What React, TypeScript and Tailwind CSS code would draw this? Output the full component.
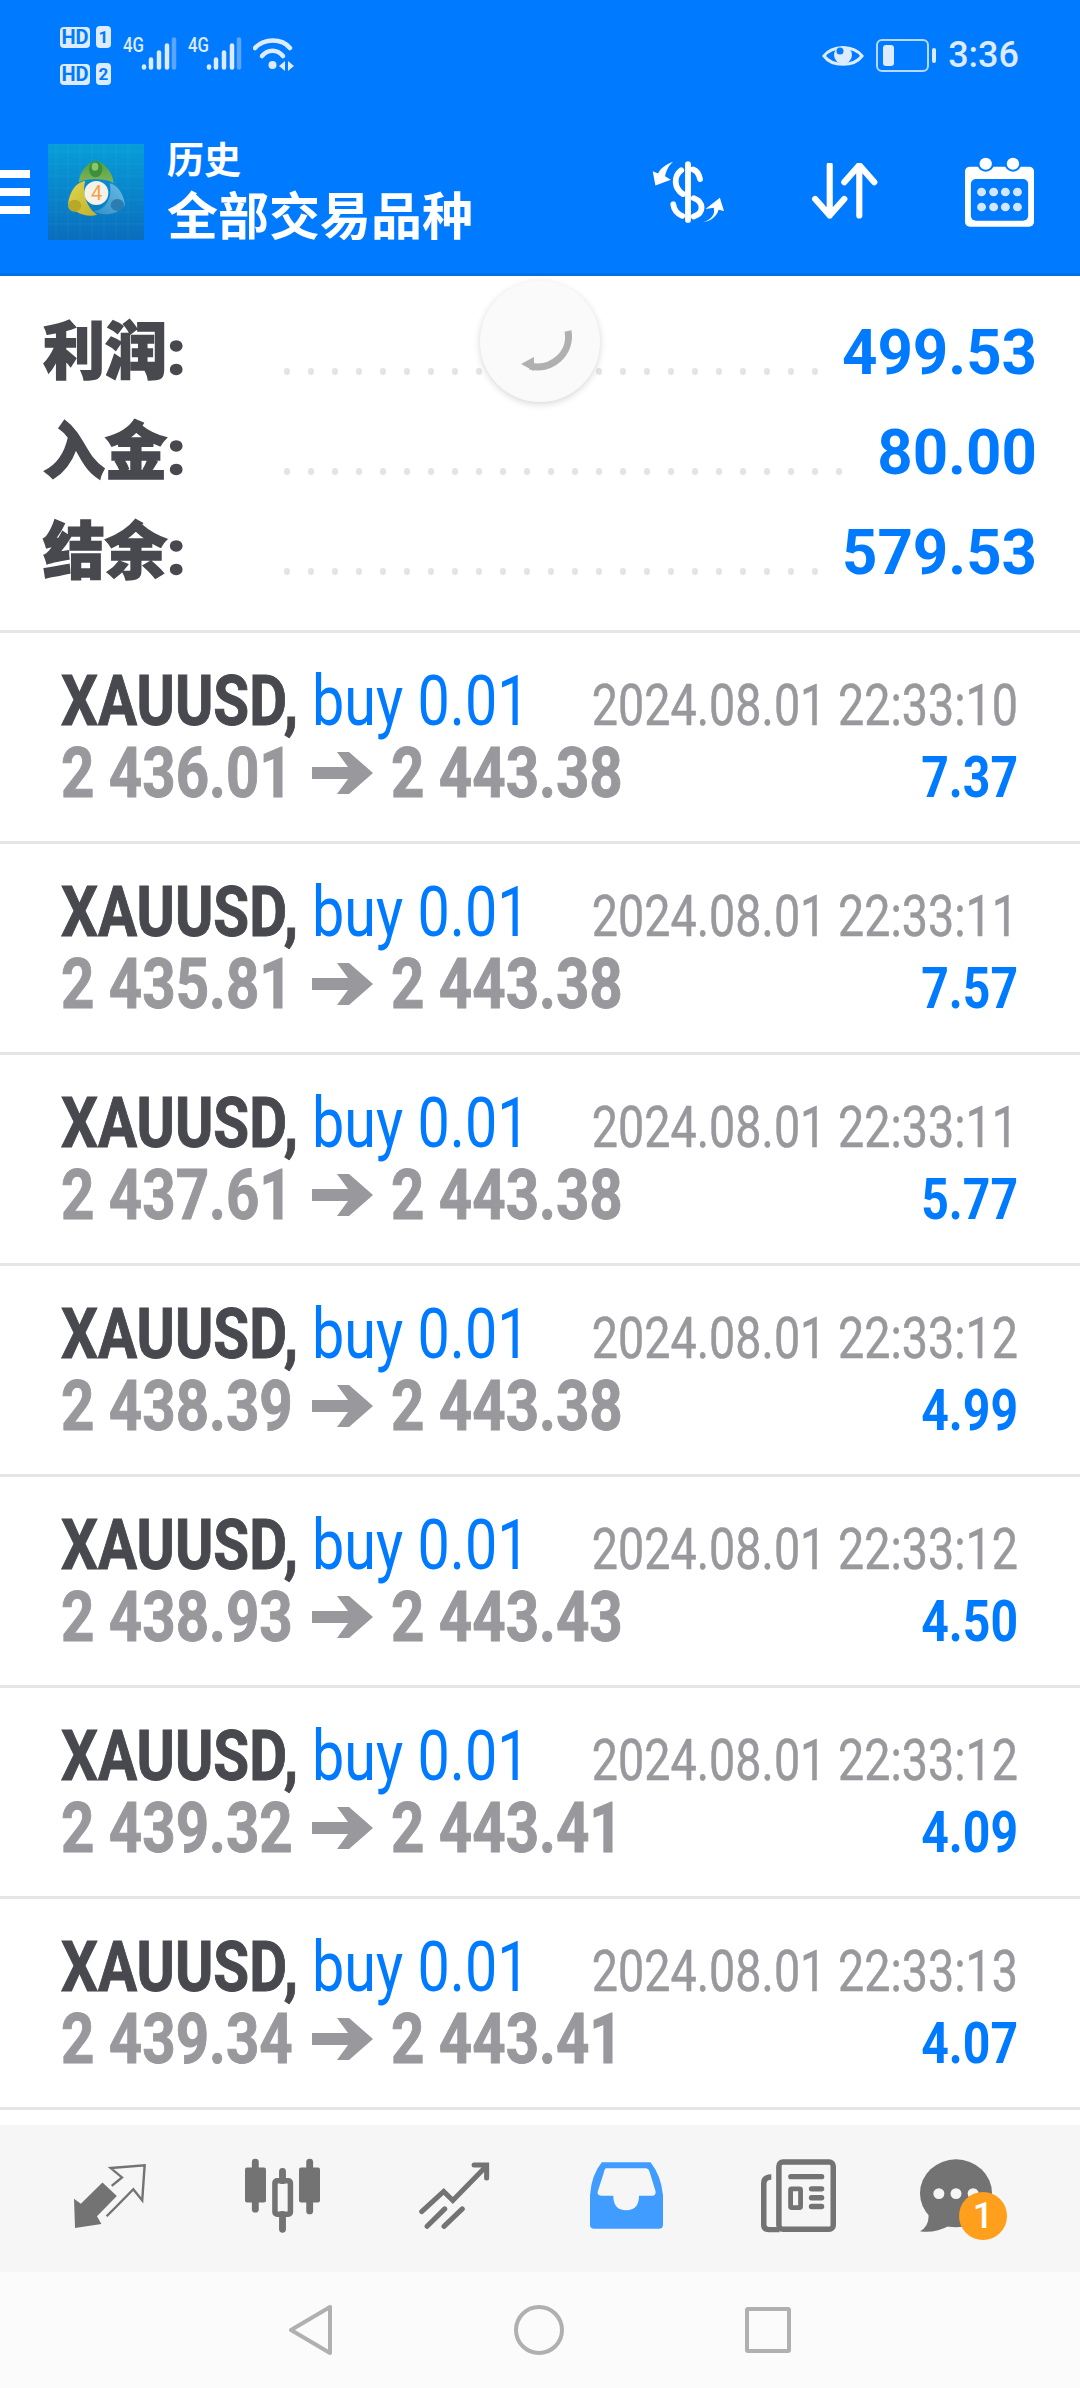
import type { ReactNode } from "react";

const trades = [
  { open: "2 436.01", close: "2 443.38", time: "2024.08.01 22:33:10", profit: "7.37" },
  { open: "2 435.81", close: "2 443.38", time: "2024.08.01 22:33:11", profit: "7.57" },
  { open: "2 437.61", close: "2 443.38", time: "2024.08.01 22:33:11", profit: "5.77" },
  { open: "2 438.39", close: "2 443.38", time: "2024.08.01 22:33:12", profit: "4.99" },
  { open: "2 438.93", close: "2 443.43", time: "2024.08.01 22:33:12", profit: "4.50" },
  { open: "2 439.32", close: "2 443.41", time: "2024.08.01 22:33:12", profit: "4.09" },
  { open: "2 439.34", close: "2 443.41", time: "2024.08.01 22:33:13", profit: "4.07" },
];

const summary = [
  { label: "利润:", value: "499.53", dots: 23 },
  { label: "入金:", value: "80.00", dots: 24 },
  { label: "结余:", value: "579.53", dots: 23 },
];

const STATUS = "#dcebff";

function Hd({ n }: { n: string }) {
  return (
    <div className="flex items-center gap-[6px]">
      <span className="flex h-[21px] w-[30px] items-center justify-center rounded-[4px] bg-[#dcebff] text-[20px] leading-none font-bold text-[#007aff]">
        HD
      </span>
      <span className="flex h-[22px] w-[15px] items-center justify-center rounded-[4px] bg-[#dcebff] text-[17px] leading-none font-bold text-[#007aff]">
        {n}
      </span>
    </div>
  );
}

function Signal() {
  return (
    <div className="relative h-[33px] w-[53px]">
      <span className="absolute top-0 left-0 origin-left scale-x-[0.8] text-[21px] leading-[17px] font-medium text-[#dcebff]">4G</span>
      <svg className="absolute top-0 left-[18px]" width="36" height="33" viewBox="0 0 36 33">
        <g stroke={STATUS} strokeWidth="4.5" strokeLinecap="round">
          <path d="M3 30.5v-1" />
          <path d="M10 30.5v-8" />
          <path d="M18 30.5v-15" />
          <path d="M26 30.5v-22" />
          <path d="M33 30.5v-28" stroke="#5aa6ff" />
        </g>
      </svg>
    </div>
  );
}

function Wifi() {
  return (
    <svg width="42" height="36" viewBox="0 0 42 36" fill="none">
      <g stroke={STATUS} strokeWidth="4.5" strokeLinecap="round">
        <path d="M2 11C11 1 29 1 37 11" />
        <path d="M9 19C15 12 24 12 30 19" />
      </g>
      <circle cx="19.5" cy="28" r="4" fill={STATUS} />
      <path d="M32 24v10l-6-5zM35 24v10l6-5z" fill={STATUS} />
    </svg>
  );
}

function Eye() {
  return (
    <svg width="42" height="28" viewBox="0 0 42 28" fill="none">
      <path d="M2 14C10 3 32 3 40 14C32 25 10 25 2 14Z" stroke={STATUS} strokeWidth="3" />
      <circle cx="21" cy="13" r="9" fill={STATUS} />
      <circle cx="18" cy="9" r="3.5" fill="#007aff" />
    </svg>
  );
}

function Battery() {
  return (
    <svg width="60" height="33" viewBox="0 0 60 33" fill="none">
      <rect x="1" y="1" width="51" height="31" rx="5" stroke="#b8d8ff" strokeWidth="2" />
      <rect x="7" y="6" width="11" height="21" rx="3" fill={STATUS} />
      <rect x="56" y="9" width="4" height="15" rx="2" fill={STATUS} />
    </svg>
  );
}

function MtLogo() {
  return (
    <svg className="mr-[23px]" width="96" height="96" viewBox="0 0 288 288">
      <defs>
        <linearGradient id="lg" x1="0" y1="0" x2="0" y2="1">
          <stop offset="0" stopColor="#079ed9" />
          <stop offset="1" stopColor="#0a6dbd" />
        </linearGradient>
        <linearGradient id="green" x1="0" y1="0" x2="0" y2="1">
          <stop offset="0" stopColor="#4f9f3d" />
          <stop offset="1" stopColor="#7fb55a" />
        </linearGradient>
        <linearGradient id="yellow" x1="0" y1="0" x2="1" y2="1">
          <stop offset="0" stopColor="#e2d54f" />
          <stop offset="1" stopColor="#c2b22c" />
        </linearGradient>
        <linearGradient id="blue" x1="1" y1="0" x2="0" y2="1">
          <stop offset="0" stopColor="#6cbce2" />
          <stop offset="1" stopColor="#2f8fca" />
        </linearGradient>
      </defs>
      <rect width="288" height="288" fill="url(#lg)" />
      <g stroke="#ffffff" strokeOpacity="0.08" strokeWidth="2">
        <path d="M24 0v288M60 0v288M96 0v288M132 0v288M168 0v288M204 0v288M240 0v288" />
        <path d="M0 24H288M0 60H288M0 96H288M0 132H288M0 168H288M0 204H288M0 240H288" />
      </g>
      <path d="M92 115C95 82 118 56 143 50C170 56 195 85 197 118C180 102 110 102 92 115Z" fill="url(#green)" />
      <ellipse cx="143" cy="76" rx="20" ry="24" fill="#3f8f3a" />
      <ellipse cx="141" cy="68" rx="10" ry="12" fill="#86c96c" />
      <path d="M112 110C85 115 65 140 60 180C75 205 115 222 148 212C120 195 100 150 112 110Z" fill="url(#yellow)" />
      <ellipse cx="80" cy="185" rx="20" ry="18" fill="#b7a82a" />
      <path d="M185 118C215 125 232 165 230 185C205 214 165 217 135 202C170 200 195 165 185 118Z" fill="url(#blue)" />
      <ellipse cx="208" cy="183" rx="20" ry="18" fill="#2c7cb4" />
      <circle cx="145" cy="147" r="36" fill="#f5f2ea" />
      <text x="146" y="169" textAnchor="middle" fontSize="60" fill="#f2a24a" fontFamily="Roboto, sans-serif">4</text>
    </svg>
  );
}

function DollarIcon() {
  return (
    <svg width="72" height="62" viewBox="330 485 210 182" preserveAspectRatio="none" fill="none">
      <g stroke="#fff" strokeWidth="17" strokeLinecap="round">
        <path d="M435 494V658" />
        <path d="M470 538C466 518 456 512 450 510" />
        <path d="M415 512C392 530 394 565 420 582" />
        <path d="M452 594C482 606 482 638 452 648" />
        <path d="M392 612C394 630 404 640 418 646" />
      </g>
      <path d="M392 487C370 495 352 508 348 522L332 515L340 557L385 540L368 530C372 510 380 497 392 487Z" fill="#fff" />
      <path d="M480 665C505 655 515 640 510 622L486 626L528 593L540 632L524 628C520 645 505 660 480 665Z" fill="#fff" />
    </svg>
  );
}

function SortIcon() {
  return (
    <svg width="67" height="58" viewBox="790 498 197 166" preserveAspectRatio="none" fill="none">
      <g stroke="#fff" strokeWidth="18" strokeLinecap="round" strokeLinejoin="round">
        <path d="M845 504V648M802 601L845 648L888 601" />
        <path d="M932 648V504M888 553L932 504L976 553" />
      </g>
    </svg>
  );
}

function CalendarIcon() {
  return (
    <svg width="69" height="70" viewBox="1237 466 200 210" preserveAspectRatio="none">
      <rect x="1237" y="495" width="200" height="180" rx="14" fill="#fff" />
      <circle cx="1297" cy="486" r="24" fill="#007aff" />
      <circle cx="1376" cy="486" r="24" fill="#007aff" />
      <circle cx="1297" cy="486" r="18" fill="#fff" />
      <circle cx="1376" cy="486" r="18" fill="#fff" />
      <rect x="1254" y="532" width="166" height="125" rx="15" fill="#007aff" />
      <g fill="#d2e6ff">
        {[1285, 1320, 1354, 1389].map((x) => (
          <g key={x}>
            <circle cx={x} cy="571" r="13" />
            <circle cx={x} cy="616" r="13" />
          </g>
        ))}
      </g>
    </svg>
  );
}

function TradeArrow() {
  return (
    <svg className="mr-[18px]" width="61" height="42" viewBox="0 0 61 42">
      <path d="M0 15H36L25 0H37L61 21L37 42H25L36 27H0Z" fill="#98989d" />
    </svg>
  );
}

function Left({ className, children }: { className: string; children: ReactNode }) {
  return <span className={`inline-block origin-left whitespace-nowrap ${className}`}>{children}</span>;
}

function Right({ className, children }: { className: string; children: ReactNode }) {
  return <span className={`flex origin-right justify-end whitespace-nowrap ${className}`}>{children}</span>;
}

function Header() {
  return (
    <header className="h-[276px] border-b-[3px] border-[#0070ea] bg-[#007aff]">
      <div className="flex h-[144px] items-start justify-between pr-[61px] pl-[60px]">
        <div className="flex pt-[26px]">
          <div className="flex flex-col gap-[15px]">
            <Hd n="1" />
            <Hd n="2" />
          </div>
          <div className="mt-[11px] ml-[12px] flex gap-[12px]">
            <Signal />
            <Signal />
            <Wifi />
          </div>
        </div>
        <div className="flex items-center gap-[12px] pt-[39px]">
          <Eye />
          <Battery />
          <span className="text-[36px] leading-[33px] font-medium text-[#dcebff]">3:36</span>
        </div>
      </div>
      <div className="flex h-[96px] items-center">
        <div className="mr-[18px] flex w-[30px] flex-col gap-[10px]">
          <div className="h-[8px] bg-white" />
          <div className="h-[8px] bg-white" />
          <div className="h-[8px] bg-white" />
        </div>
        <MtLogo />
        <div className="flex flex-col font-bold text-white">
          <span className="text-[37px] leading-[46px]">历史</span>
          <span className="mt-[5px] text-[51px] leading-[56px]">全部交易品种</span>
        </div>
        <div className="ml-auto flex items-center pr-[46px]">
          <div className="mr-[87px]"><DollarIcon /></div>
          <div className="mr-[87px]"><SortIcon /></div>
          <CalendarIcon />
        </div>
      </div>
    </header>
  );
}

function Summary() {
  return (
    <section className="relative h-[357px] border-b-[3px] border-[#e5e5e5] pt-[22px] pr-[43px] pl-[43px]">
      {summary.map((row) => (
        <div key={row.label} className="flex h-[100px] items-center">
          <span className="mt-[10px] w-[241px] text-[62px] leading-[80px] font-black text-[#48484f] [-webkit-text-stroke:1.5px_#48484f]">{row.label}</span>
          <div className="mt-[46px] flex gap-[18px]">
            {Array.from({ length: row.dots }).map((_, i) => (
              <span key={i} className="h-[7px] w-[6px] rounded-full bg-[#e4e4e4]" />
            ))}
          </div>
          <span className="mt-[10px] ml-auto origin-right scale-x-[0.98] text-[63px] leading-[80px] font-bold text-[#007aff]">{row.value}</span>
        </div>
      ))}
      <div className="absolute top-[5px] left-[480px] flex h-[121px] w-[120px] items-center justify-center rounded-full bg-[#fafafa] shadow-[0_2px_7px_rgba(0,0,0,0.16)]">
        <svg width="120" height="121" viewBox="0 0 120 121" fill="none">
          <path d="M88 50C92 72 72 90 50 85" stroke="#b0b0b0" strokeWidth="7" />
          <path d="M54 76L41 83L54 90Z" fill="#b0b0b0" />
        </svg>
      </div>
    </section>
  );
}

function TradeRow({ open, close, time, profit }: (typeof trades)[number]) {
  return (
    <div className="h-[211px] border-b-[3px] border-[#e5e5e5] pt-[30px] pr-[62px] pl-[61px]">
      <div className="flex h-[72px] items-baseline justify-between">
        <div className="flex items-baseline">
          <Left className="w-[251px] scale-x-[0.82] text-[71px] leading-[75px] font-bold text-[#48484f] [-webkit-text-stroke:1px_#48484f]">XAUUSD,</Left>
          <Left className="w-[230px] scale-x-[0.81] text-[71px] leading-[75px] text-[#007aff]">buy 0.01</Left>
        </div>
        <Right className="w-[426px] scale-x-[0.805] text-[58px] leading-[75px] text-[#98989d] [-webkit-text-stroke:0.5px_#98989d]">{time}</Right>
      </div>
      <div className="flex h-[75px] items-baseline justify-between">
        <div className="flex items-center">
          <Left className="w-[251px] scale-x-[0.82] text-[71px] leading-[75px] font-bold text-[#98989d] [-webkit-text-stroke:1px_#98989d]">{open}</Left>
          <TradeArrow />
          <Left className="w-[230px] scale-x-[0.82] text-[71px] leading-[75px] font-bold text-[#98989d] [-webkit-text-stroke:1px_#98989d]">{close}</Left>
        </div>
        <Right className="w-[100px] scale-x-[0.83] text-[58px] leading-[75px] font-bold text-[#007aff]">{profit}</Right>
      </div>
    </div>
  );
}

function TabBar() {
  const gray = "#737373";
  return (
    <nav className="mt-[15px] flex h-[147px] items-center bg-[#f6f6f6] px-[24px] pb-[6px]">
      <div className="flex w-[172px] justify-center">
        <svg width="72" height="64" viewBox="215 200 210 190" preserveAspectRatio="none" fill="none">
          <path d="M215 303L235 318L298 255L340 295L282 355L295 378L218 390Z" fill={gray} />
          <path d="M325 265L355 240L322 212L421 204L414 308L388 275L335 330L310 355" stroke={gray} strokeWidth="7" />
        </svg>
      </div>
      <div className="flex w-[172px] justify-center">
        <svg width="75" height="75" viewBox="708 182 218 224" preserveAspectRatio="none" fill="none">
          <g stroke={gray} strokeLinecap="round" strokeWidth="20">
            <path d="M738 194V335" />
            <path d="M896 194V340" />
            <path d="M817 222V250M817 350V395" />
          </g>
          <rect x="708" y="210" width="61" height="105" rx="6" fill={gray} />
          <rect x="865" y="210" width="61" height="105" rx="6" fill={gray} />
          <rect x="795" y="250" width="45" height="100" rx="6" stroke={gray} strokeWidth="16" />
        </svg>
      </div>
      <div className="flex w-[172px] justify-center">
        <svg width="71" height="67" viewBox="1212 190 210 200" preserveAspectRatio="none" fill="none">
          <g stroke={gray} strokeWidth="15" strokeLinecap="round" strokeLinejoin="miter">
            <path d="M1220 338L1285 278L1312 305L1408 206" />
            <path d="M1375 199H1412V238" />
            <path d="M1236 382L1288 330" />
            <path d="M1286 382L1340 330" />
          </g>
        </svg>
      </div>
      <div className="flex w-[172px] justify-center">
        <svg width="73" height="67" viewBox="146 191 210 200" preserveAspectRatio="none">
          <path d="M146 290Q150 230 180 192L320 192Q350 230 356 290L356 378Q356 390 344 390L158 390Q146 390 146 378Z" fill="#409cff" />
          <path d="M192 210L308 210Q316 212 318 222L335 280Q335 292 325 292L287 292Q287 335 250 335Q213 335 213 292L178 292Q166 290 168 280L185 225Q188 212 192 210Z" fill="#f6f6f6" />
        </svg>
      </div>
      <div className="flex w-[172px] justify-center">
        <svg width="75" height="74" viewBox="646 182 218 218" preserveAspectRatio="none" fill="none">
          <rect x="698" y="191" width="158" height="198" rx="12" stroke={gray} strokeWidth="16" />
          <path d="M676 235Q654 235 654 255L654 375Q654 390 670 390L700 390" stroke={gray} strokeWidth="16" />
          <path d="M733 234H822M793 270H822M793 296H822M793 322H822" stroke={gray} strokeWidth="16" strokeLinecap="round" />
          <rect x="732" y="270" width="29" height="55" rx="3" stroke={gray} strokeWidth="14" />
        </svg>
      </div>
      <div className="relative flex w-[172px] justify-center">
        <svg className="mr-[28px]" width="72" height="74" viewBox="1108 182 210 218" preserveAspectRatio="none">
          <ellipse cx="1213" cy="283" rx="105" ry="100" fill={gray} />
          <path d="M1133 345Q1135 380 1108 395Q1150 402 1195 378Z" fill={gray} />
          <circle cx="1163" cy="284" r="16" fill="#f6f6f6" />
          <circle cx="1213" cy="284" r="16" fill="#f6f6f6" />
          <circle cx="1263" cy="284" r="16" fill="#f6f6f6" />
        </svg>
        <span className="absolute top-[33px] left-[75px] flex h-[48px] w-[48px] items-center justify-center rounded-full bg-[#ff9f1c] text-[36px] font-medium text-white">
          1
        </span>
      </div>
    </nav>
  );
}

function SystemNav() {
  return (
    <div className="flex h-[116px] items-center justify-center gap-[181px] bg-[#fbfbfb]">
      <svg width="44" height="50" viewBox="0 0 44 50" fill="none">
        <path d="M2 25L41 2V48Z" stroke="#b0b0b0" strokeWidth="4" strokeLinejoin="round" />
      </svg>
      <div className="h-[50px] w-[50px] rounded-full border-[4px] border-[#b0b0b0]" />
      <div className="h-[46px] w-[46px] rounded-[3px] border-[4px] border-[#b0b0b0]" />
    </div>
  );
}

export default function App() {
  return (
    <div className="h-[2388px] w-[1080px] overflow-hidden bg-white font-['Roboto','Noto_Sans_CJK_SC',sans-serif]">
      <Header />
      <Summary />
      {trades.map((t, i) => (
        <TradeRow key={i} {...t} />
      ))}
      <TabBar />
      <SystemNav />
    </div>
  );
}
